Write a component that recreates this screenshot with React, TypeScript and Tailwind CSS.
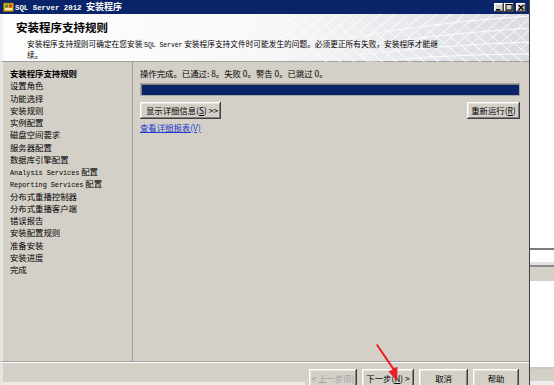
import React from "react";

const btn3d =
  "bg-[#d4d0c8] shadow-[inset_-1px_-1px_#404040,inset_1px_1px_#ffffff,inset_-2px_-2px_#808080,inset_2px_2px_#e8e6e2]";

function Lat({ children, cls = "text-[6.8px]" }: { children: React.ReactNode; cls?: string }) {
  return <span className={`font-['Liberation_Mono',monospace] ${cls}`}>{children}</span>;
}

const navItems: React.ReactNode[] = [
  "设置角色",
  "功能选择",
  "安装规则",
  "实例配置",
  "磁盘空间要求",
  "服务器配置",
  "数据库引擎配置",
  <>
    <Lat>Analysis Services</Lat> 配置
  </>,
  <>
    <Lat>Reporting Services</Lat> 配置
  </>,
  "分布式重播控制器",
  "分布式重播客户端",
  "错误报告",
  "安装配置规则",
  "准备安装",
  "安装进度",
  "完成",
];

function HeaderPattern() {
  const lines: React.ReactNode[] = [];
  for (let i = 0; i < 22; i++) {
    const x = i * 14;
    lines.push(<line key={"a" + i} x1={x} y1={0} x2={x - 60} y2={50} />);
    lines.push(<line key={"b" + i} x1={x} y1={0} x2={x + 60} y2={50} />);
  }
  return (
    <svg width="260" height="48" viewBox="0 0 260 48" className="absolute right-0 top-0">
      <defs>
        <linearGradient id="fade" x1="0" x2="1" y1="0" y2="0">
          <stop offset="0" stopColor="#fff" stopOpacity="0" />
          <stop offset="0.5" stopColor="#fff" stopOpacity="0.85" />
          <stop offset="1" stopColor="#fff" stopOpacity="1" />
        </linearGradient>
      </defs>
      <g stroke="url(#fade)" strokeWidth="1" fill="none">
        {lines}
        <path d="M0 40 Q130 10 260 2" />
        <path d="M0 48 Q130 22 260 14" />
        <path d="M20 50 Q140 32 260 28" />
        <path d="M60 52 Q160 40 260 40" />
      </g>
    </svg>
  );
}

function WinBtn({ kind }: { kind: "min" | "max" | "close" }) {
  return (
    <div className={`w-[10px] h-[9px] ${btn3d} flex items-center justify-center`}>
      <svg width="8" height="7" viewBox="0 0 8 7">
        {kind === "min" && <rect x="1" y="5" width="4" height="1.5" fill="#000" />}
        {kind === "max" && (
          <rect x="1" y="0.5" width="6" height="5.5" fill="none" stroke="#000" strokeWidth="1" />
        )}
        {kind === "close" && (
          <path d="M1.5 1 L6.5 6 M6.5 1 L1.5 6" stroke="#000" strokeWidth="1.4" />
        )}
      </svg>
    </div>
  );
}

export default function App() {
  return (
    <div className="relative w-[554px] h-[385px] overflow-hidden bg-white flex font-['Noto_Sans_CJK_SC',sans-serif] text-black">
      {/* window */}
      <div className="w-[530px] h-full flex flex-col border-r border-[#404040] bg-[#d4d0c8]">
        {/* title bar */}
        <div className="h-[14px] bg-[#0a246a] flex items-center pl-[3px] pr-[3px] shrink-0">
          <svg width="11" height="10" viewBox="0 0 11 10">
            <rect x="0.5" y="1" width="10" height="8.5" fill="#e8b020" stroke="#7a5a10" strokeWidth="0.6" />
            <rect x="2" y="2.5" width="3" height="3" fill="#3a9a30" />
            <rect x="6" y="2.5" width="3" height="3" fill="#d04020" />
            <rect x="2" y="6" width="7" height="2" fill="#f8e8a0" />
          </svg>
          <div className="ml-[1px] text-white font-bold leading-none text-[9px] whitespace-nowrap">
            <Lat cls="text-[7.4px]">SQL Server 2012 </Lat>安装程序
          </div>
          <div className="flex-1" />
          <div className="flex items-center">
            <WinBtn kind="min" />
            <WinBtn kind="max" />
            <div className="w-[2px]" />
            <WinBtn kind="close" />
          </div>
        </div>
        {/* header */}
        <div className="relative h-[48px] shrink-0 bg-[linear-gradient(90deg,#fdfdfd_0%,#f8f8f9_50%,#d9dbe0_100%)] border-b border-[#a0a0a0] border-l-[3px] border-l-[#f4f4f4]">
          <HeaderPattern />
          <div className="relative pl-[13px] pt-[6px] text-[11.5px] font-bold leading-[14px]">
            安装程序支持规则
          </div>
          <div className="relative pl-[24px] pt-[5px] text-[7.7px] leading-[9px] whitespace-nowrap">
            安装程序支持规则可确定在您安装 <Lat cls="text-[6.4px]">SQL Server</Lat> 安装程序支持文件时可能发生的问题。必须更正所有失败，安装程序才能继
            <br />
            续。
          </div>
        </div>
        {/* body */}
        <div className="flex-1 flex border-l-[3px] border-[#e6e4df] min-h-0 border-b border-b-[#a0a0a0]">
          <div className="w-[130px] border-r border-[#9a9a9a] pl-[7px] pt-[5px] text-[8.4px]">
            <div className="h-[12.25px] leading-[12.25px] font-bold whitespace-nowrap">安装程序支持规则</div>
            {navItems.map((it, i) => (
              <div key={i} className="h-[12.25px] leading-[12.25px] whitespace-nowrap">
                {it}
              </div>
            ))}
          </div>
          <div className="flex-1 pl-[7px] pr-[9px] pt-[5px] text-[8.4px]">
            <div className="h-[12px] leading-[12px] whitespace-nowrap">
              操作完成。已通过: 8。失败 0。警告 0。已跳过 0。
            </div>
            <div className="mt-[4px] h-[13px] border border-[#a8a6a0] bg-[#0a246a] shadow-[inset_1px_1px_#808080]" />
            <div className="mt-[6px] flex justify-between">
              <div className={`w-[81px] h-[17px] ${btn3d} flex items-center pl-[6px] whitespace-nowrap`}>
                显示详细信息(<span className="underline">S</span>) &gt;&gt;
              </div>
              <div className={`w-[53px] h-[17px] ${btn3d} flex items-center justify-center whitespace-nowrap`}>
                重新运行(<span className="underline">R</span>)
              </div>
            </div>
            <div className="mt-[3px] text-[#1a3dcc] underline leading-[10px] whitespace-nowrap">
              查看详细报表(V)
            </div>
          </div>
        </div>
        {/* footer */}
        <div className="h-[23px] shrink-0 flex border-t border-white border-l-[3px] border-l-[#e6e4df] text-[8.4px]">
          <div className="flex-1 self-stretch border-b-[3px] border-[#eceae6] mr-[4px]" />
          <div className="flex items-start pt-[6px] gap-[5px] pr-[10px]">
            <div className={`w-[48px] h-[18px] ${btn3d} flex items-center justify-center text-[#a0a0a0] whitespace-nowrap`}>
              &lt; 上一步(B)
            </div>
            <div className={`w-[52px] h-[18px] ${btn3d} flex items-center justify-center whitespace-nowrap`}>
              下一步(<span className="underline">N</span>) &gt;
            </div>
            <div className={`w-[49px] h-[18px] ${btn3d} flex items-center justify-center`}>取消</div>
            <div className={`w-[46px] h-[18px] ${btn3d} flex items-center justify-center`}>帮助</div>
          </div>
        </div>
      </div>
      {/* right outside area */}
      <div className="flex-1 flex flex-col">
        <div className="h-[248px] bg-white" />
        <div className="h-[2px] bg-[#7a7a7a]" />
        <div className="h-[12px] bg-white" />
        <div className="h-[3px] bg-[#e2e2e2]" />
        <div className="h-[2px] bg-[#8a8a8a]" />
        <div className="h-[14px] bg-[#d4d0c8]" />
        <div className="flex-1 bg-white" />
        <div className="h-[2px] bg-[#c8c8c8]" />
        <div className="h-[12px] bg-[#d4d0c8]" />
        <div className="h-[4px] bg-[#eeeeee]" />
      </div>
      {/* red arrow annotation */}
      <svg className="absolute left-0 top-0 pointer-events-none" width="554" height="385" viewBox="0 0 554 385">
        <path d="M376 345 L392.5 369.5 L388.5 371.5 L397 381 L397.5 367 L394 368 L377.5 344 Z" fill="#ee1c25" />
      </svg>
    </div>
  );
}
